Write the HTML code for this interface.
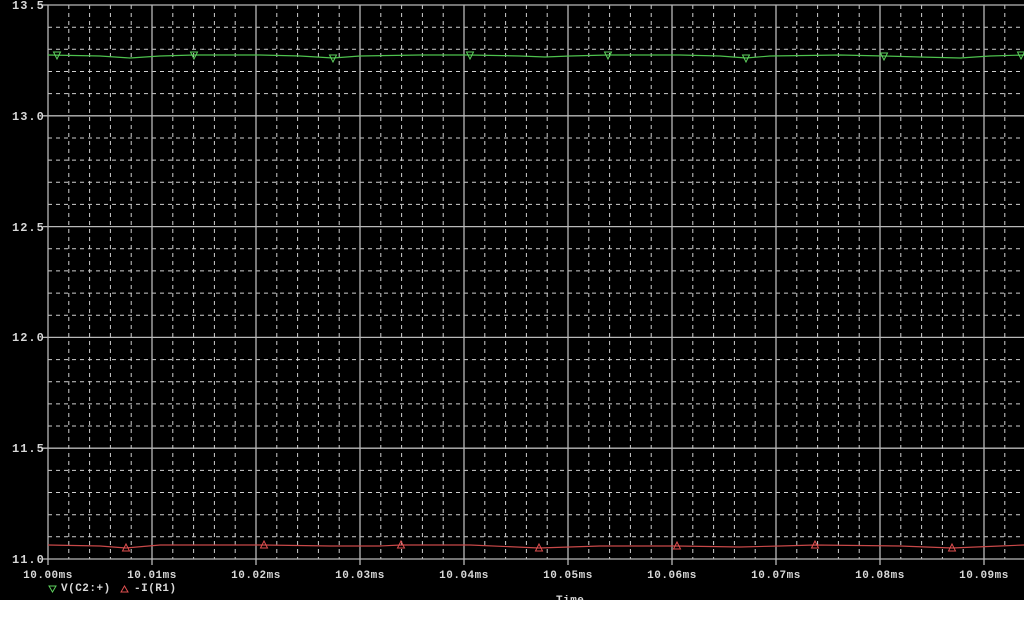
<!DOCTYPE html>
<html><head><meta charset="utf-8"><style>
html,body{margin:0;padding:0;background:#fff;}
svg{display:block;}
text{font-family:"Liberation Mono",monospace;font-weight:bold;font-size:11px;fill:#d8d8d8;letter-spacing:0.5px;}
.y{font-size:12px;letter-spacing:1px;}
</style></head><body>
<svg width="1024" height="643" viewBox="0 0 1024 643" xmlns="http://www.w3.org/2000/svg">
<rect x="0" y="0" width="1024" height="600" fill="#000"/>
<path fill="none" stroke="#cfcfcf" stroke-width="1" stroke-dasharray="4,4" d="
M68.8,5V559 M89.6,5V559 M110.4,5V559 M131.2,5V559
M172.8,5V559 M193.6,5V559 M214.4,5V559 M235.2,5V559
M276.8,5V559 M297.6,5V559 M318.4,5V559 M339.2,5V559
M380.8,5V559 M401.6,5V559 M422.4,5V559 M443.2,5V559
M484.8,5V559 M505.6,5V559 M526.4,5V559 M547.2,5V559
M588.8,5V559 M609.6,5V559 M630.4,5V559 M651.2,5V559
M692.8,5V559 M713.6,5V559 M734.4,5V559 M755.2,5V559
M796.8,5V559 M817.6,5V559 M838.4,5V559 M859.2,5V559
M900.8,5V559 M921.6,5V559 M942.4,5V559 M963.2,5V559
M1004.8,5V559
M48,27.2H1024 M48,49.3H1024 M48,71.5H1024 M48,93.6H1024
M48,138H1024 M48,160.1H1024 M48,182.3H1024 M48,204.4H1024
M48,248.8H1024 M48,270.9H1024 M48,293.1H1024 M48,315.2H1024
M48,359.6H1024 M48,381.7H1024 M48,403.9H1024 M48,426H1024
M48,470.4H1024 M48,492.5H1024 M48,514.7H1024 M48,536.8H1024"/>
<path fill="none" stroke="#b8b8b8" stroke-width="1.3" d="
M48,5V565 M152,5V565 M256,5V565 M360,5V565 M464,5V565 M568,5V565 M672,5V565 M776,5V565 M880,5V565 M984,5V565
M43,5H1024 M43,115.8H1024 M43,226.6H1024 M43,337.4H1024 M43,448.2H1024 M43,559H1024"/>
<polyline fill="none" stroke="#4ec24e" stroke-width="1.2" points="48,55 100,56 130,58 160,56 194,55 260,55 300,56 333,58 360,56 420,55 470,55 520,56 545,57 570,56 608,55 680,55 720,56 746,58 770,56 840,55 884,56 920,57 960,58 990,56 1024,55"/>
<polyline fill="none" stroke="#c84848" stroke-width="1.2" points="48,545 100,546 126,548 160,545 264,545 330,546 380,546 401,545 470,545 539,548 600,546 677,546 740,547 780,546 815,545 900,546 952,548 1000,546 1024,545"/>
<g fill="none" stroke="#5ed05e" stroke-width="1">
<path d="M53.5,52H60.5L57,59Z"/><path d="M190.5,52H197.5L194,59Z"/><path d="M329.5,55H336.5L333,62Z"/><path d="M466.5,52H473.5L470,59Z"/><path d="M604.5,52H611.5L608,59Z"/><path d="M742.5,55H749.5L746,62Z"/><path d="M880.5,53H887.5L884,60Z"/><path d="M1017.5,52H1024.5L1021,59Z"/>
</g>
<g fill="none" stroke="#e05050" stroke-width="1">
<path d="M122.5,551H129.5L126,544Z"/><path d="M260.5,548H267.5L264,541Z"/><path d="M397.5,548H404.5L401,541Z"/><path d="M535.5,551H542.5L539,544Z"/><path d="M673.5,549H680.5L677,542Z"/><path d="M811.5,548H818.5L815,541Z"/><path d="M948.5,551H955.5L952,544Z"/>
</g>
<text class="y" x="12" y="9">13.5</text>
<text class="y" x="12" y="120">13.0</text>
<text class="y" x="12" y="231">12.5</text>
<text class="y" x="12" y="341">12.0</text>
<text class="y" x="12" y="452">11.5</text>
<text class="y" x="12" y="563">11.0</text>
<g text-anchor="middle">
<text x="48" y="578">10.00ms</text><text x="152" y="578">10.01ms</text><text x="256" y="578">10.02ms</text><text x="360" y="578">10.03ms</text><text x="464" y="578">10.04ms</text><text x="568" y="578">10.05ms</text><text x="672" y="578">10.06ms</text><text x="776" y="578">10.07ms</text><text x="880" y="578">10.08ms</text><text x="984" y="578">10.09ms</text>
</g>
<path d="M49,586H56L52.5,592Z" fill="none" stroke="#5ed05e"/>
<text x="61" y="591">V(C2:+)</text>
<path d="M121,592H128L124.5,586Z" fill="none" stroke="#e05050"/>
<text x="134" y="591">-I(R1)</text>
<text x="556" y="603">Time</text>
<rect x="0" y="600" width="1024" height="43" fill="#fff"/>
</svg>
</body></html>
